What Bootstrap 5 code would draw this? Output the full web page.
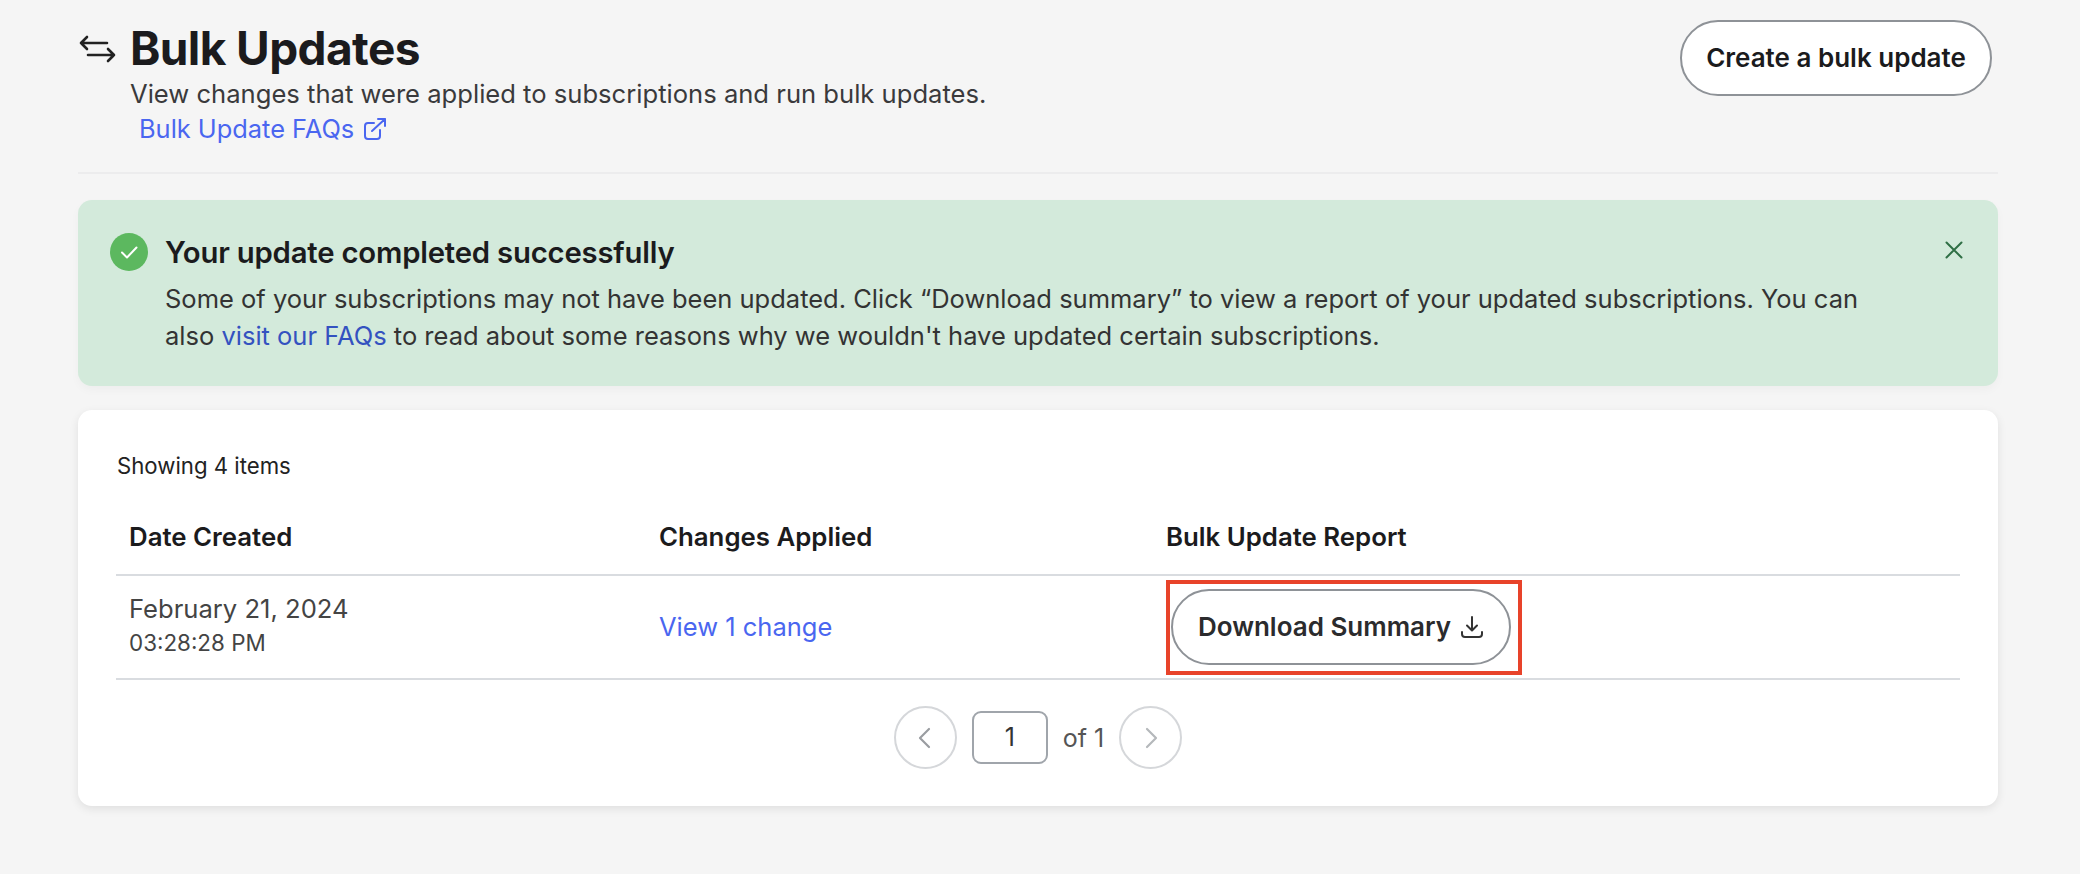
<!doctype html>
<html lang="en"><head><meta charset="utf-8"><title>Bulk Updates</title>
<link href="https://cdn.jsdelivr.net/npm/bootstrap@5.3.0/dist/css/bootstrap.min.css" rel="stylesheet">
<style>
html,body{height:100%;overflow:hidden}
body{background:#f5f5f5;font-family:Inter,"Liberation Sans",sans-serif;color:#333;font-size:21px;line-height:30px}
.page-wrap{padding:0 82px 0 78px}
.head-row{height:174px;border-bottom:2px solid #ececed;padding-top:20px}
.head-icon{width:37px;height:28px;margin:15px 14px 0 1px;flex:none}
.page-title{font-size:46px;line-height:52px;font-weight:700;color:#1b1b1d;margin:2px 0 0;letter-spacing:-.6px}
.sub-text{font-size:25.6px;line-height:30px;margin-top:5px;color:#3a3a3c}
.faq-link,.view-link{color:#4a66f0;text-decoration:none}
.faq-link{display:inline-flex;align-items:center;gap:9px;margin:5px 0 0 9px;font-size:25.4px;line-height:30px}
.pill-btn{border:2px solid #8e9297;border-radius:38px;background:#fff;color:#1b1b1d;font-weight:600;font-size:26px;padding:0}
.create-btn{width:312px;height:76px;margin-right:6px}
.ok-alert{background:#d3eadb;border:0;border-radius:14px;height:186px;margin:26px 0 24px;padding:33px 32px 0;color:#333;box-shadow:0 4px 10px rgba(0,0,0,.03)}
.ok-dot{width:38px;height:38px;flex:none;margin:0 17px 0 0}
.ok-title{font-size:29.300px;line-height:34px;font-weight:600;color:#1b1b1d;letter-spacing:-.2px;margin-top:3px}
.ok-text{font-size:25.500px;line-height:37px;margin-top:10px;width:1710px}
.ok-text a{color:#3352c0;text-decoration:none}
.close-x{width:18px;height:18px;margin:8px 3px 0 auto;flex:none}
.items-card{background:#fff;border:0;border-radius:14px;height:396px;padding:0 38px 0 38px;box-shadow:0 3px 10px rgba(0,0,0,.09)}
.count-text{font-size:22.200px;line-height:28px;padding:42px 0 0 1px;color:#222}
.items-table{margin:25px 0 0;table-layout:fixed;width:100%}
.items-table th{font-weight:600;font-size:25.800px;color:#1b1b1d;height:70px;padding:0 0 5px 13px;vertical-align:middle;border-bottom:2px solid #d9dce0;background:transparent}
.items-table td{height:104px;padding:0 0 0 13px;vertical-align:middle;border-bottom:2px solid #d9dce0;background:transparent;color:#444}
.date-main{font-size:25.600px;line-height:34px;margin-top:-2px}
.date-time{font-size:22.400px;line-height:34px}
.view-link{font-size:25.500px;position:relative;top:1px}
.red-box{display:inline-block;border:4px solid #e8432a;width:356px;height:95px;padding:5px 0 0 1px;vertical-align:middle}
.dl-btn{width:340px;height:76px;display:flex;align-items:center;justify-content:center;gap:9px;color:#2b2b2d}
.pager{gap:15px;margin-top:26px}
.page-circle{width:63px;height:63px;border:2px solid #d5d7da;border-radius:50%;background:#fff;display:flex;align-items:center;justify-content:center}
.page-input{width:76px;height:53px;border:2px solid #a0a5ab;border-radius:9px;text-align:center;font-size:25px;line-height:49px;color:#333}
.of-text{font-size:25px;color:#555}
</style></head>
<body>
<div class="page-wrap">
 <div class="head-row d-flex align-items-start">
  <svg class="head-icon" viewBox="0 0 37 28" fill="none" stroke="#222" stroke-width="2.6" stroke-linecap="round" stroke-linejoin="round"><path d="M8 2 2 8l6 6M2 8h26M29 14l6 6-6 6M35 20H9"/></svg>
  <div>
   <h1 class="page-title">Bulk Updates</h1>
   <div class="sub-text">View changes that were applied to subscriptions and run bulk updates.</div>
   <a class="faq-link" href="#">Bulk Update FAQs
    <svg width="24" height="24" viewBox="0 0 24 24" fill="none" stroke="#4a66f0" stroke-width="2" stroke-linecap="round" stroke-linejoin="round"><path d="M17 13v6a3 3 0 0 1-3 3H5a3 3 0 0 1-3-3V9a3 3 0 0 1 3-3h6M9 14 22 2M15 2h7v7"/></svg></a>
  </div>
  <button class="pill-btn create-btn ms-auto" type="button">Create a bulk update</button>
 </div>

 <div class="alert ok-alert d-flex align-items-start" role="alert">
  <svg class="ok-dot" viewBox="0 0 38 38"><circle cx="19" cy="19" r="19" fill="#5cb85f"/><path d="M12 19.5l5 5 9.500-10" fill="none" stroke="#fff" stroke-width="2" stroke-linecap="round" stroke-linejoin="round"/></svg>
  <div>
   <div class="ok-title">Your update completed successfully</div>
   <div class="ok-text"><div>Some of your subscriptions may not have been updated. Click “Download summary” to view a report of your updated subscriptions. You can</div><div>also <a href="#">visit our FAQs</a> to read about some reasons why we wouldn't have updated certain subscriptions.</div></div>
  </div>
  <svg class="close-x" viewBox="0 0 18 18" stroke="#2f6f45" stroke-width="2" stroke-linecap="round"><path d="M1.500 1.500l15 15M16.500 1.500l-15 15"/></svg>
 </div>

 <div class="card items-card">
  <div class="count-text">Showing 4 items</div>
  <table class="table items-table">
   <colgroup><col style="width:530px"><col style="width:507px"><col></colgroup>
   <thead><tr><th>Date Created</th><th>Changes Applied</th><th>Bulk Update Report</th></tr></thead>
   <tbody><tr>
    <td><div class="date-main">February 21, 2024</div><div class="date-time">03:28:28 PM</div></td>
    <td><a class="view-link" href="#">View 1 change</a></td>
    <td><span class="red-box"><button class="pill-btn dl-btn" type="button">Download Summary
      <svg width="24" height="24" viewBox="0 0 24 24" fill="none" stroke="#333" stroke-width="2" stroke-linecap="round" stroke-linejoin="round"><path d="M12 2v13M7 10.500l5 5 5-5M2 17v2a3 3 0 0 0 3 3h14a3 3 0 0 0 3-3v-2"/></svg></button></span></td>
   </tr></tbody>
  </table>
  <div class="pager d-flex justify-content-center align-items-center">
   <span class="page-circle"><svg width="16" height="24" viewBox="0 0 16 24" fill="none" stroke="#9a9da1" stroke-width="2.200" stroke-linecap="round" stroke-linejoin="round"><path d="M12 3 3 12l9 9"/></svg></span>
   <span class="page-input">1</span>
   <span class="of-text">of 1</span>
   <span class="page-circle"><svg width="16" height="24" viewBox="0 0 16 24" fill="none" stroke="#b5b8bb" stroke-width="2.200" stroke-linecap="round" stroke-linejoin="round"><path d="M4 3l9 9-9 9"/></svg></span>
  </div>
 </div>
</div>
<script src="https://cdn.jsdelivr.net/npm/bootstrap@5.3.0/dist/js/bootstrap.bundle.min.js"></script>
</body></html>
